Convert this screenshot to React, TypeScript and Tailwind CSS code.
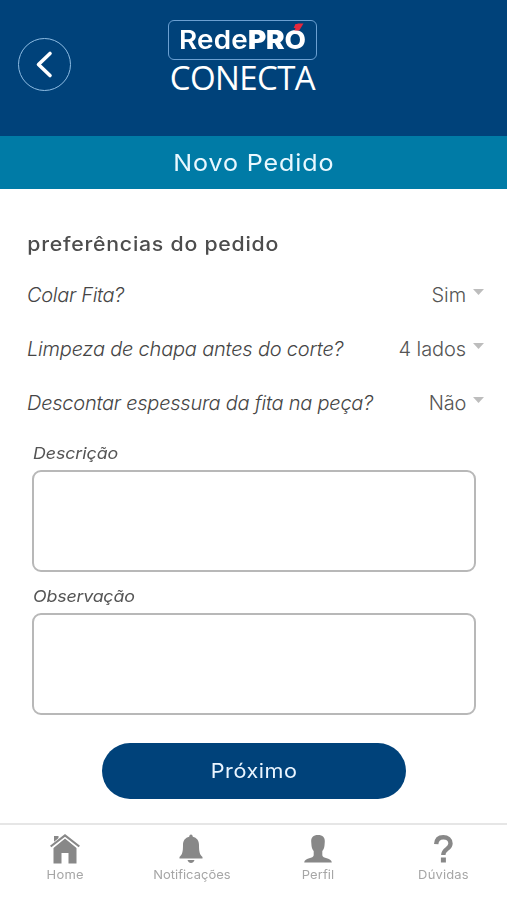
import { useState } from "react";

const PREFERENCES = [
  {
    label: "Colar Fita?",
    value: "Sim",
    labelClass: "tracking-[-0.3px]",
    valueClass: "tracking-[-0.1px]",
  },
  {
    label: "Limpeza de chapa antes do corte?",
    value: "4 lados",
    labelClass: "tracking-[-0.2px]",
    valueClass: "tracking-[-0.1px]",
  },
  {
    label: "Descontar espessura da fita na peça?",
    value: "Não",
    labelClass: "tracking-[-0.24px]",
    valueClass: "tracking-[-0.3px]",
  },
];

function Logo() {
  return (
    <div className="flex w-[149px] flex-col items-center text-white">
      <div className="h-[40px] w-full rounded-[6px] border-[1.5px] border-[#6ba0d2]">
        <div className="flex h-full scale-x-107 items-center justify-center text-[26px] leading-none whitespace-nowrap">
          <span className="font-semibold tracking-[0.2px]">Rede</span>
          <span className="font-black tracking-[-0.2px]">PR</span>
          <span className="relative -my-2 bg-[linear-gradient(to_bottom,#e5293e_11.5px,#ffffff_11.5px)] bg-clip-text py-2 font-extrabold text-transparent">
            Ó
            <svg viewBox="0 0 10 8" className="absolute top-[4px] left-[8px] h-[8px] w-[10px]">
              <path d="M4 .5h5.500L5.500 7.500H1z" fill="#e5293e" />
            </svg>
          </span>
        </div>
      </div>
      <div className="mt-[1px] font-['Open_Sans'] text-[33px] leading-[34px] tracking-[-0.6px]">
        CONECTA
      </div>
    </div>
  );
}

function Header() {
  return (
    <header className="grid h-[136px] grid-cols-[168px_149px_1fr] bg-[#00427a] pt-5">
      <button
        type="button"
        aria-label="Voltar"
        className="mt-[18px] ml-[18px] flex size-[53px] items-center justify-center rounded-full border-[1.5px] border-[#8dbbe2]"
      >
        <svg viewBox="0 0 53 53" className="size-[53px] shrink-0" fill="none">
          <path
            d="M32 15.5 20.5 26.5 32 37.5"
            stroke="#fff"
            strokeWidth="3.6"
            strokeLinecap="round"
            strokeLinejoin="round"
          />
        </svg>
      </button>
      <Logo />
    </header>
  );
}

function PreferenceRow({ item }: { item: (typeof PREFERENCES)[number] }) {
  return (
    <div className="flex h-[54px] items-center justify-between text-[20px] font-light text-[#454545]">
      <span className={`italic ${item.labelClass}`}>{item.label}</span>
      <button type="button" className="flex items-center gap-[7px] text-[#555]">
        <span className={item.valueClass}>{item.value}</span>
        <svg viewBox="0 0 11 6" className="mb-[7px] h-[6px] w-[11px]" fill="#bdbdbd">
          <path d="M0 0h11L5.500 6z" />
        </svg>
      </button>
    </div>
  );
}

function TextField({
  label,
  value,
  onChange,
  className,
}: {
  label: string;
  value: string;
  onChange: (v: string) => void;
  className: string;
}) {
  return (
    <label className="flex flex-col">
      <span
        className={`h-[35px] origin-left scale-x-108 pl-[1px] text-[16.5px] leading-[36px] text-[#555] italic ${className}`}
      >
        {label}
      </span>
      <textarea
        value={value}
        onChange={(e) => onChange(e.target.value)}
        className="h-[102px] w-full resize-none rounded-[9px] border-2 border-[#b8b8b8] bg-white px-3 py-2 text-base focus:outline-none"
      />
    </label>
  );
}

function HomeIcon() {
  return (
    <svg viewBox="0 0 30 30" className="size-[30px]" fill="#888">
      <path d="M4 2h4.500v6L4 12z" />
      <path d="M3.500 14 15 4.500 26.500 14v15.500h-8V19h-7v10.500h-8z" />
      <path d="M.7 13 15 1.500 29.300 13" fill="none" stroke="#fff" strokeWidth="4" />
      <path d="M.7 12.500 15 1.500 29.300 12.500" fill="none" stroke="#888" strokeWidth="2.200" />
    </svg>
  );
}

function BellIcon() {
  return (
    <svg viewBox="0 0 30 30" className="size-[30px]" fill="#888">
      <path d="M15 .5c1.200 0 1.600 1 1.800 2.200 4 .9 6.200 4 6.200 8.300 0 6.800.6 9.500 3.500 12v1.500h-23V23C6.400 20.500 7 17.800 7 11c0-4.300 2.200-7.400 6.200-8.300C13.400 1.500 13.800.5 15 .5z" />
      <path d="M11.500 26h7c-.6 2-1.900 3-3.500 3s-2.900-1-3.500-3z" />
    </svg>
  );
}

function ProfileIcon() {
  return (
    <svg viewBox="0 0 30 30" className="size-[30px]" fill="#888">
      <path d="M15 1c4.800 0 7 2.400 6.800 6.500l-.3 4c-.2 2.500-1.100 4.300-2.200 5.500v4.300c0 1.700 2.300 2.300 4.500 3 3.200 1 4.800 2 5 4.200H1.200c.2-2.200 1.800-3.200 5-4.200 2.200-.7 4.500-1.300 4.500-3V17c-1.100-1.200-2-3-2.200-5.500l-.3-4C8 3.400 10.200 1 15 1z" />
    </svg>
  );
}

function HelpIcon() {
  return (
    <svg viewBox="0 0 30 30" className="size-[30px]" fill="#888">
      <path
        d="M7.200 10.200C7.400 5.800 10 3.200 14.300 3.200c4.300 0 7.200 2.500 7.200 6.300 0 5.500-7.200 5.300-7.200 11.500"
        fill="none"
        stroke="#888"
        strokeWidth="4.400"
      />
      <path d="M11.900 23.500h5v5h-5z" />
    </svg>
  );
}

const TABS = [
  { label: "Home", icon: HomeIcon, className: "tracking-[0.2px]" },
  { label: "Notificações", icon: BellIcon, className: "tracking-[0.02px]" },
  { label: "Perfil", icon: ProfileIcon, className: "tracking-[0.1px]" },
  { label: "Dúvidas", icon: HelpIcon, className: "tracking-[0.15px]" },
];

export default function App() {
  const [description, setDescription] = useState("");
  const [note, setNote] = useState("");

  return (
    <div className="flex h-[900px] w-[507px] flex-col bg-white font-['Inter',sans-serif]">
      <Header />
      <h1 className="flex h-[53px] items-center justify-center bg-[#007ba6] text-[23px] tracking-[0.8px] text-[#e9f8ff]">
        <span className="mt-[2px] scale-x-109">Novo Pedido</span>
      </h1>

      <main className="flex h-[634px] flex-col pt-[39px]">
        <h2 className="h-[40px] w-fit origin-left scale-x-109 pl-[25px] text-[19.5px] leading-[33px] font-medium tracking-[0.7px] text-[#4d4d4d]">
          preferências do pedido
        </h2>
        <div className="pr-[23px] pl-[27px]">
          {PREFERENCES.map((item) => (
            <PreferenceRow key={item.label} item={item} />
          ))}
        </div>
        <div className="flex flex-col gap-[6px] pt-[5px] pr-[31px] pl-8">
          <TextField
            label="Descrição"
            value={description}
            onChange={setDescription}
            className="tracking-[-0.1px]"
          />
          <TextField
            label="Observação"
            value={note}
            onChange={setNote}
            className="tracking-[-0.2px]"
          />
        </div>
        <button
          type="button"
          className="mt-7 ml-[102px] h-[56px] w-[304px] shrink-0 rounded-full bg-[#00427a] text-[20px] tracking-[0.5px] text-[#eaf5ff]"
        >
          <span className="inline-block scale-x-108">Próximo</span>
        </button>
      </main>

      <nav className="grid h-[77px] grid-cols-4 border-t-2 border-[#e6e6e6] pt-[9px] pl-[2px]">
        {TABS.map((tab) => (
          <button
            key={tab.label}
            type="button"
            className="flex flex-col items-center text-[12px] leading-[22px] text-[#a6a6a6]"
          >
            <tab.icon />
            <span className={`scale-x-108 ${tab.className}`}>{tab.label}</span>
          </button>
        ))}
      </nav>
    </div>
  );
}
